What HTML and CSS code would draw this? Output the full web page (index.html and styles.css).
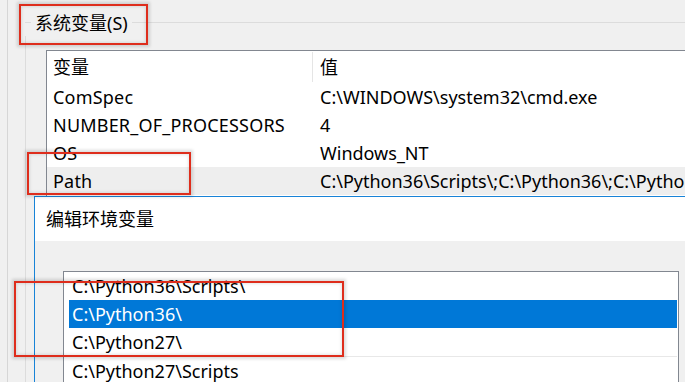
FILE: index.html
```html
<html>
<head>
    <link rel="stylesheet" href="styles.css">
</head>
<body>
    <div class="window">
        <div class="group">
            <div class="group-head">
                <span class="head-line short"></span>
                <span class="group-label">系统变量(S)</span>
                <span class="head-line"></span>
            </div>
            <div class="group-body">
                <div class="var-list">
                    <div class="var-row header">
                        <div class="cell name">变量</div>
                        <div class="cell value">值</div>
                    </div>
                    <div class="var-row">
                        <div class="cell name">ComSpec</div>
                        <div class="cell value">C:\WINDOWS\system32\cmd.exe</div>
                    </div>
                    <div class="var-row">
                        <div class="cell name">NUMBER_OF_PROCESSORS</div>
                        <div class="cell value">4</div>
                    </div>
                    <div class="var-row">
                        <div class="cell name">OS</div>
                        <div class="cell value">Windows_NT</div>
                    </div>
                    <div class="var-row hover">
                        <div class="cell name">Path</div>
                        <div class="cell value">C:\Python36\Scripts\;C:\Python36\;C:\Pytho</div>
                    </div>
                </div>
            </div>
        </div>
    </div>

    <div class="dialog">
        <div class="dialog-title">编辑环境变量</div>
        <div class="dialog-body">
            <div class="path-list">
                <div class="path-item">C:\Python36\Scripts\</div>
                <div class="path-item selected">C:\Python36\</div>
                <div class="path-item">C:\Python27\</div>
                <div class="path-item split">C:\Python27\Scripts</div>
            </div>
        </div>
    </div>

    <div class="mark mark-group"></div>
    <div class="mark mark-path"></div>
    <div class="mark mark-items"></div>
</body>
</html>
```

FILE: styles.css
```css
body {
    margin: 0;
    width: 685px;
    height: 382px;
    overflow: hidden;
    position: relative;
    background-color: #f0f0f0;
    font-family: "Noto Sans", "Noto Sans CJK SC", sans-serif;
    font-size: 18px;
    color: #000;
}
.window {
    display: flex;
    flex-direction: column;
    box-sizing: border-box;
    margin-left: 7px;
    height: 382px;
    border-left: 1px solid #d6d6d6;
    padding: 10px 0 0 17px;
}
.group {
    flex: 1;
    display: flex;
    flex-direction: column;
}
.group-head {
    display: flex;
    align-items: center;
    height: 26px;
}
.head-line {
    flex: 1;
    border-top: 1px solid #dcdcdc;
    margin-top: -1px;
}
.head-line.short {
    flex: none;
    width: 6px;
}
.group-label {
    padding: 0 4px;
    line-height: 26px;
    white-space: nowrap;
}
.group-body {
    flex: 1;
    display: flex;
    flex-direction: column;
    border-left: 1px solid #dcdcdc;
    padding: 14px 0 0 20px;
}
.var-list {
    flex: 1;
    background-color: #fff;
    border-top: 1px solid #828790;
    border-left: 1px solid #828790;
    overflow: hidden;
}
.var-row {
    display: grid;
    grid-template-columns: 266px 1fr;
    height: 28px;
    line-height: 28px;
    white-space: nowrap;
}
.var-row.header {
    height: 32px;
    line-height: 32px;
}
.var-row.hover {
    background-color: #eeeeee;
}
.cell {
    overflow: hidden;
}
.cell.name {
    padding-left: 6px;
    letter-spacing: 0.2px;
}
.header .cell.name {
    border-right: 1px solid #e5e5e5;
    margin: 1px 0;
    line-height: 30px;
    letter-spacing: 0;
}
.cell.value {
    padding-left: 7px;
}
.dialog {
    position: absolute;
    left: 34px;
    top: 196px;
    right: 0;
    bottom: 0;
    border-top: 1px solid #1883d7;
    border-left: 1px solid #1883d7;
    background-color: #f0f0f0;
}
.dialog-title {
    height: 44px;
    line-height: 44px;
    padding-left: 11px;
    background-color: #fff;
}
.dialog-body {
    padding: 30px 0 0 28px;
}
.path-list {
    width: 616px;
    height: 111px;
    box-sizing: border-box;
    border: 1px solid #828790;
    border-bottom: none;
    background-color: #fff;
    padding: 0 1px 0 5px;
}
.path-item {
    height: 28px;
    line-height: 28px;
    padding-left: 3px;
    white-space: nowrap;
}
.path-item.selected {
    background-color: #0078d7;
    color: #fff;
}
.path-item.split {
    height: 26px;
    border-top: 1px solid #e8e8e8;
}
.mark {
    position: absolute;
    box-sizing: border-box;
    border: 2px solid #de2d1c;
    box-shadow: 0 0 3px 2px rgba(0, 0, 0, 0.14), inset 0 0 3px 1px rgba(0, 0, 0, 0.1);
}
.mark-group {
    left: 19px;
    top: 4px;
    width: 129px;
    height: 41px;
}
.mark-path {
    left: 27px;
    top: 152px;
    width: 164px;
    height: 43px;
}
.mark-items {
    left: 14px;
    top: 281px;
    width: 330px;
    height: 76px;
}
```
